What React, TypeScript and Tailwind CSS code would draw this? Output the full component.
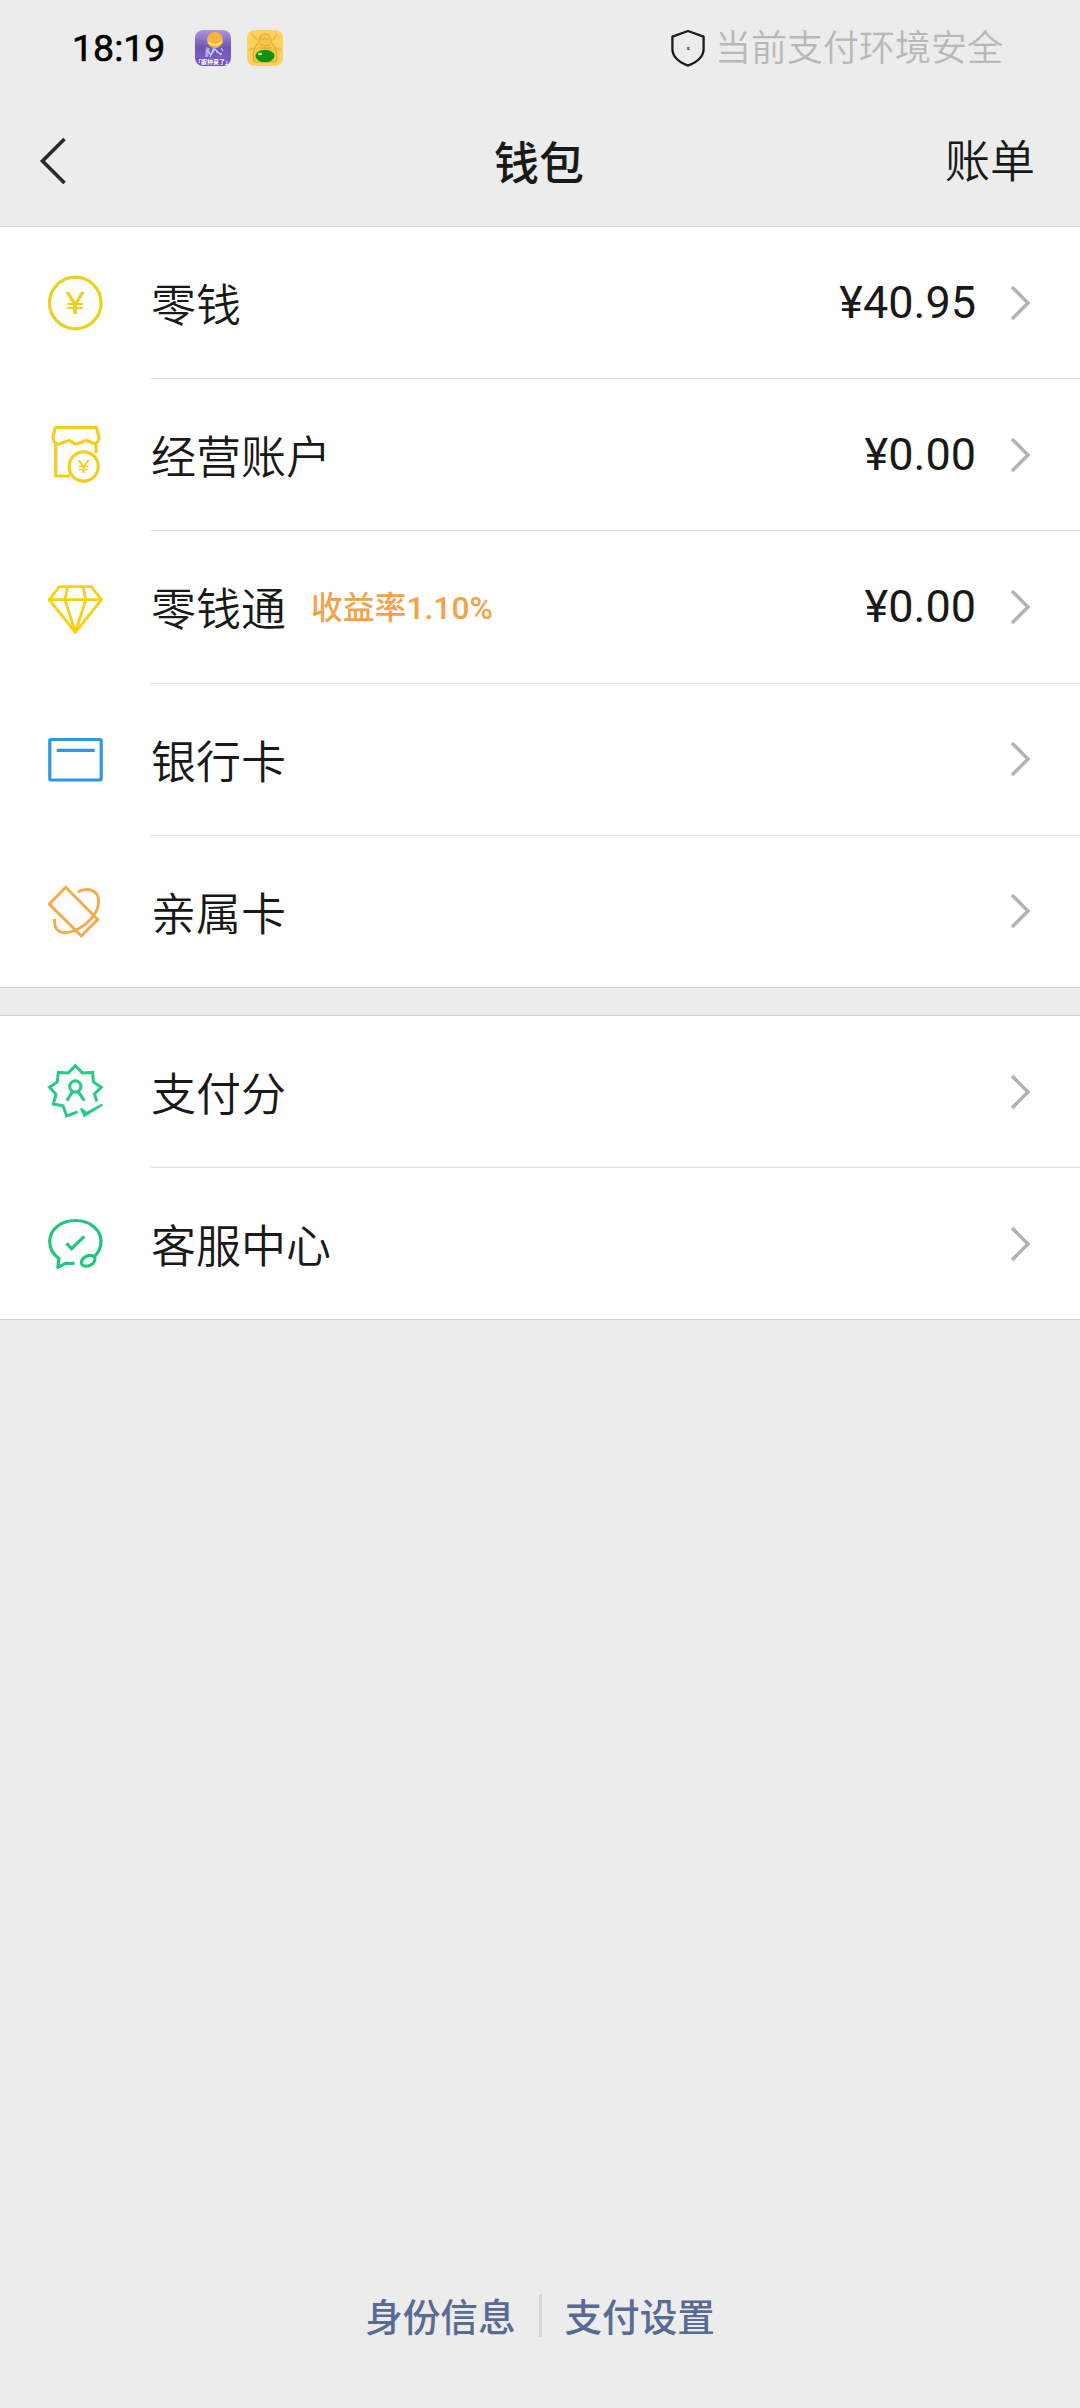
import React from 'react';

interface WalletItem {
  label: string;
  icon: React.ReactNode;
  amount?: string;
  note?: string;
}

function RowIcon({ color, children }: { color: string; children: React.ReactNode }) {
  return (
    <svg
      viewBox="0 0 60 60"
      className="w-15 h-15 shrink-0"
      fill="none"
      stroke={color}
      strokeWidth={3.2}
      strokeLinejoin="round"
    >
      {children}
    </svg>
  );
}

const BALANCE_ITEMS: WalletItem[] = [
  {
    label: '零钱',
    amount: '¥40.95',
    icon: (
      <RowIcon color="#ecd01c">
        <circle cx="30.3" cy="30" r="25.8" />
        <text
          x="20.3"
          y="41.3"
          textLength="20"
          lengthAdjust="spacingAndGlyphs"
          fill="#ecd01c"
          stroke="none"
          className="font-[Roboto] text-[31px] font-normal"
        >
          ¥
        </text>
      </RowIcon>
    ),
  },
  {
    label: '经营账户',
    amount: '¥0.00',
    icon: (
      <RowIcon color="#f5cd1e">
        <path d="M10.2 2.7H51.5L54 12C54 15.5 52.5 18.5 49.5 18.5C46 18.5 44 15.5 41.5 15.5S34.5 19 31 19S26.5 15.5 24 15.5S17 19 13.5 19S8 15.5 8 12Z" />
        <path d="M10.7 17.5V51H25M51 17.5V28" />
        <circle cx="38.7" cy="41.5" r="14.6" />
        <text
          x="32.5"
          y="48.3"
          textLength="12.4"
          lengthAdjust="spacingAndGlyphs"
          fill="#f5cd1e"
          stroke="none"
          className="font-[Roboto] text-[19px] font-normal"
        >
          ¥
        </text>
      </RowIcon>
    ),
  },
  {
    label: '零钱通',
    amount: '¥0.00',
    note: '收益率1.10%',
    icon: (
      <RowIcon color="#fbcf0c">
        <path
          strokeWidth={2.8}
          d="M14.5 9.7H46.2L56.5 22.7L30.3 55.4L4.2 22.7ZM4.2 22.7H56.5M22.6 9.7L20 22.7L30.3 55.4L40.8 22.7L38 9.7"
        />
      </RowIcon>
    ),
  },
  {
    label: '银行卡',
    icon: (
      <RowIcon color="#2f97e2">
        <rect x="4.8" y="9.5" width="51.4" height="40.5" rx="1.2" />
        <path d="M11.7 20.3H49.7" />
      </RowIcon>
    ),
  },
  {
    label: '亲属卡',
    icon: (
      <RowIcon color="#f4ab4a">
        <path
          strokeWidth={2.9}
          d="M20.7 6.3L4.3 23.1L36.3 55L52.7 38.6ZM32.7 10.9C43 5.8 53.7 9.3 53.7 20.3C53.7 34.3 40 44.8 31 49C18 54.8 8.2 51.3 9.7 37.9"
        />
      </RowIcon>
    ),
  },
];

const SERVICE_ITEMS: WalletItem[] = [
  {
    label: '支付分',
    icon: (
      <RowIcon color="#2ac987">
        <path
          strokeLinejoin="miter"
          strokeWidth={3}
          d="M51.8 39.5L49.5 32L56.3 25.3L48.3 20L47.7 10.4L37.3 10.9L30.3 3.7L23.3 10.9L13.3 10.4L12.3 20L4.6 25.3L11 32.3L8.3 42L18 43.8L21.7 54L32.5 49.8"
        />
        <path d="M35 46.5L37 46L41.6 49.8L57 41.6L58 43.4L38.7 55.5Z" fill="#2ac987" stroke="none" />
        <circle cx="30.3" cy="24.5" r="5.6" />
        <path d="M27.6 29.5L21.8 38.7M33 29.5L39.4 38.7" />
      </RowIcon>
    ),
  },
  {
    label: '客服中心',
    icon: (
      <RowIcon color="#21c57b">
        <path d="M29.5 49C25.5 50 22.5 49.3 20.5 49.3L12.8 53.3L14 44.6C8 40.3 4.7 34.5 4.7 27.6C4.7 15.2 16 6.5 30.3 6.5S56 15.2 56 27.6C56 33.5 53.5 38.5 49.8 42.2" />
        <ellipse cx="43.2" cy="46.8" rx="7.3" ry="4.8" transform="rotate(-27 43.2 46.8)" />
        <path d="M21.5 29.3L26.7 34.7L39.2 22.3" strokeLinejoin="miter" />
      </RowIcon>
    ),
  },
];

function Row({ item, last }: { item: WalletItem; last: boolean }) {
  return (
    <div
      className={`flex h-[152.2px] items-stretch pl-[45px] ${last ? 'border-b border-[#d3d3d3]' : ''}`}
    >
      <div className="flex w-[106px] items-center">{item.icon}</div>
      <div
        className={`flex flex-1 items-center pr-[49px] ${last ? '' : 'border-b border-[#e0e0e0]'}`}
      >
        <span className="pt-[8px] text-[45px] leading-none font-[350]">{item.label}</span>
        {item.note && (
          <span className="ml-[25px] pt-[4px] text-[31.8px] leading-none font-medium text-[#f3a24c]">
            {item.note}
          </span>
        )}
        {item.amount && <span className="ml-auto text-[45px] leading-none">{item.amount}</span>}
        <svg
          viewBox="0 0 22 40"
          className={`h-10 w-[22px] ${item.amount ? 'ml-[33px]' : 'ml-auto'}`}
          fill="none"
          stroke="#b2b2b2"
          strokeWidth={3.4}
        >
          <path d="M3 4L19 20L3 36" />
        </svg>
      </div>
    </div>
  );
}

function StatusBar() {
  return (
    <div className="flex h-24 items-center pr-[77px] pl-[72px]">
      <span className="w-[123px] pt-[2px] font-[Roboto] text-[37.5px] leading-none font-normal text-black [-webkit-text-stroke:0.6px_#000]">
        18:19
      </span>

      {/* Notification icons */}
      <svg viewBox="0 0 36 36" className="h-9 w-9">
        <defs>
          <linearGradient id="violet" x1="0" y1="0" x2="0" y2="1">
            <stop offset="0" stopColor="#b394e4" />
            <stop offset="0.5" stopColor="#6a55b0" />
            <stop offset="1" stopColor="#8a63dc" />
          </linearGradient>
        </defs>
        <rect width="36" height="36" rx="8" fill="url(#violet)" />
        <path d="M11 17L15 18L13 27H10Z" fill="#a9a5e6" />
        <path
          d="M12 20L16 25L20 19L26 25M19 17L15 27M21 22L27 24M26 18L28 21"
          stroke="#c9c6fa"
          strokeWidth="1.3"
          fill="none"
        />
        <circle cx="20" cy="10" r="8" fill="#f7b43a" />
        <path d="M13 12Q20 18 27 12" stroke="#ffe07c" strokeWidth="2" fill="none" />
        <path d="M1 28H35Q34 36 27 36H9Q2 36 1 28Z" fill="#7351c8" />
        <text x="18" y="34" textAnchor="middle" fill="#fff" className="text-[6px] font-bold">
          「歌神来了」
        </text>
      </svg>
      <svg viewBox="0 0 36 36" className="ml-4 h-9 w-9">
        <rect width="36" height="36" rx="8" fill="#fbd25f" />
        <path d="M5 4L10 10M30 4L26 10M2 20L7 18M34 20L29 18" stroke="#f3b83f" strokeWidth="2" />
        <path
          d="M18 4C23 4 24 8 24 12C29 16 31 24 29 32H7C5 24 7 16 12 12C12 8 13 4 18 4Z"
          fill="#f4c846"
          stroke="#dca52e"
          strokeWidth="1"
        />
        <path d="M14 9H22M13 14Q18 18 23 14M12 18H24" stroke="#d9a22c" fill="none" />
        <ellipse cx="18" cy="26" rx="9.5" ry="6.3" fill="#15910f" />
        <ellipse cx="13" cy="24" rx="2" ry="1.3" fill="#c9f0c0" />
      </svg>

      <svg
        viewBox="0 0 36 38"
        className="ml-auto h-[38px] w-9"
        fill="none"
        stroke="#1c1c1c"
        strokeWidth={2.3}
        strokeLinejoin="round"
      >
        <path d="M18 2L33.6 7.6V20C33.6 28 26 33.5 18 36.6C10 33.5 2.4 28 2.4 20V7.6Z" />
        <text
          x="18.2"
          y="21"
          textAnchor="middle"
          fill="#1c1c1c"
          stroke="none"
          className="text-[6px] font-bold"
        >
          s
        </text>
      </svg>
      <span className="ml-[9px] pt-[2px] text-[36px] leading-none font-[350] text-[#b8b8b8]">
        当前支付环境安全
      </span>
    </div>
  );
}

function NavBar() {
  return (
    <div className="grid h-[131px] grid-cols-3 items-center border-b border-[#d5d5d5] pr-[45px] pl-[38px]">
      <svg
        viewBox="0 0 30 50"
        className="h-[50px] w-[30px]"
        fill="none"
        stroke="#2a2a2a"
        strokeWidth={3.6}
      >
        <path d="M26.5 3L4.5 25L26.5 47" />
      </svg>
      <h1 className="pt-[7px] pl-[5px] text-center text-[45px] leading-none font-medium">钱包</h1>
      <button className="justify-self-end pt-[2px] text-[45px] leading-none font-[350]">账单</button>
    </div>
  );
}

export default function App() {
  return (
    <div className="flex h-[2408px] w-[1080px] flex-col bg-[#ececec] font-[Roboto,'Noto_Sans_CJK_SC',sans-serif] text-[#191919]">
      <StatusBar />
      <NavBar />

      <section className="bg-white">
        {BALANCE_ITEMS.map((item, i) => (
          <Row key={item.label} item={item} last={i === BALANCE_ITEMS.length - 1} />
        ))}
      </section>

      <section className="mt-[27px] border-t border-[#d3d3d3] bg-white">
        {SERVICE_ITEMS.map((item, i) => (
          <Row key={item.label} item={item} last={i === SERVICE_ITEMS.length - 1} />
        ))}
      </section>

      {/* Footer links */}
      <footer className="mt-auto mb-[70px] flex items-center justify-center text-[37.6px] leading-none font-medium text-[#576b95]">
        <a className="pt-[8px]">身份信息</a>
        <span className="mx-[23px] h-[43px] w-[3px] bg-[#d5d5d5]" />
        <a className="pt-[8px]">支付设置</a>
      </footer>
    </div>
  );
}
